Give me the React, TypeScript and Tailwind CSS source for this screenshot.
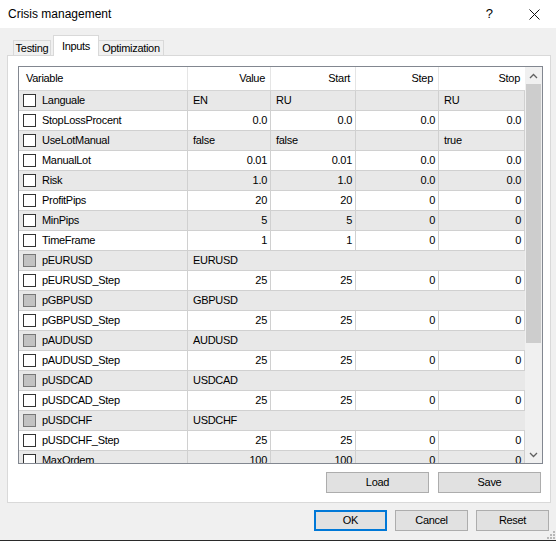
import React from "react";

type Row = { name: string; cells?: string[]; left?: boolean; section?: string };

const rows: Row[] = [
  { name: "Languale", cells: ["EN", "RU", "", "RU"], left: true },
  { name: "StopLossProcent", cells: ["0.0", "0.0", "0.0", "0.0"] },
  { name: "UseLotManual", cells: ["false", "false", "", "true"], left: true },
  { name: "ManualLot", cells: ["0.01", "0.01", "0.0", "0.0"] },
  { name: "Risk", cells: ["1.0", "1.0", "0.0", "0.0"] },
  { name: "ProfitPips", cells: ["20", "20", "0", "0"] },
  { name: "MinPips", cells: ["5", "5", "0", "0"] },
  { name: "TimeFrame", cells: ["1", "1", "0", "0"] },
  { name: "pEURUSD", section: "EURUSD" },
  { name: "pEURUSD_Step", cells: ["25", "25", "0", "0"] },
  { name: "pGBPUSD", section: "GBPUSD" },
  { name: "pGBPUSD_Step", cells: ["25", "25", "0", "0"] },
  { name: "pAUDUSD", section: "AUDUSD" },
  { name: "pAUDUSD_Step", cells: ["25", "25", "0", "0"] },
  { name: "pUSDCAD", section: "USDCAD" },
  { name: "pUSDCAD_Step", cells: ["25", "25", "0", "0"] },
  { name: "pUSDCHF", section: "USDCHF" },
  { name: "pUSDCHF_Step", cells: ["25", "25", "0", "0"] },
  { name: "MaxOrdem", cells: ["100", "100", "0", "0"] },
];

const colWidths = ["w-[83px]", "w-[85px]", "w-[83px]", "w-[86px]"];

function Check({ gray }: { gray?: boolean }) {
  return (
    <span
      className={`w-[13px] h-[13px] shrink-0 border ${
        gray ? "border-[#777] bg-[#c2c2c2]" : "border-[#333] bg-white"
      }`}
    />
  );
}

function Button({ label, focused, w }: { label: string; focused?: boolean; w: string }) {
  return (
    <div
      className={`${w} h-[21px] flex items-center justify-center bg-[#e1e1e1] ${
        focused ? "border-2 border-[#0078d7]" : "border border-[#adadad]"
      }`}
    >
      {label}
    </div>
  );
}

function Chevron({ up }: { up?: boolean }) {
  return (
    <svg width="9" height="6" viewBox="0 0 9 6" className="text-[#606060]">
      <polyline
        points={up ? "1,5 4.5,1.5 8,5" : "1,1 4.5,4.5 8,1"}
        fill="none"
        stroke="currentColor"
        strokeWidth="1.3"
      />
    </svg>
  );
}

export default function App() {
  return (
    <div className="w-[556px] h-[541px] flex flex-col font-['Liberation_Sans',Arial,sans-serif] text-[11px] tracking-[-0.3px] text-black overflow-hidden">
      {/* Title bar */}
      <div className="h-[28px] bg-white flex items-center pl-[8px] text-[12px] tracking-normal">
        <span>Crisis management</span>
        <span className="ml-auto mr-[36px] text-[13px]">?</span>
        <svg width="11" height="11" viewBox="0 0 11 11" className="mr-[16px]">
          <path d="M0.5 0.5 L10.5 10.5 M10.5 0.5 L0.5 10.5" stroke="#111" strokeWidth="1" />
        </svg>
      </div>

      {/* Body */}
      <div className="flex-1 bg-[#f0f0f0] flex flex-col border-b border-[#2a2a2a]">
        {/* Tabs */}
        <div className="h-[27px] flex items-end pl-[13px]">
          <div className="w-[38px] h-[15px] border border-b-0 border-[#d9d9d9] flex items-center justify-center">
            Testing
          </div>
          <div className="ml-[2px] w-[46px] h-[21px] -mb-px relative z-10 bg-white border border-b-0 border-[#d9d9d9] flex items-start justify-center pt-[2px]">
            Inputs
          </div>
          <div className="w-[65px] h-[15px] border border-b-0 border-l-0 border-[#d9d9d9] flex items-center justify-center">
            Optimization
          </div>
        </div>

        {/* Panel */}
        <div className="ml-[7px] w-[544px] h-[448px] border border-[#d9d9d9] bg-white pt-[10px] pl-[10px]">
          <div className="w-[525px] h-[398px] border border-[#828790] flex">
            <div className="w-[506px] h-full flex flex-col overflow-hidden">
              {/* Header */}
              <div className="h-[24px] shrink-0 flex border-b border-[#d5d5d5] bg-white">
                <div className="w-[169px] flex items-center pl-[7px] border-r border-[#e5e5e5]">Variable</div>
                {["Value", "Start", "Step", "Stop"].map((h, i) => (
                  <div
                    key={h}
                    className={`${colWidths[i]} flex items-center justify-end pr-[5px] ${
                      i < 3 ? "border-r border-[#e5e5e5]" : ""
                    }`}
                  >
                    {h}
                  </div>
                ))}
              </div>
              {/* Rows */}
              {rows.map((r, idx) => (
                <div
                  key={r.name}
                  className={`h-[20px] shrink-0 flex border-b border-[#d0d0d0] ${
                    idx % 2 === 0 ? "bg-[#e8e8e8]" : "bg-white"
                  }`}
                >
                  <div className="w-[169px] flex items-center gap-[6px] pl-[4px] border-r border-[#d0d0d0]">
                    <Check gray={!!r.section} />
                    <span>{r.name}</span>
                  </div>
                  {r.section ? (
                    <div className="flex-1 flex items-center pl-[5px]">{r.section}</div>
                  ) : (
                    r.cells!.map((c, i) => (
                      <div
                        key={i}
                        className={`${colWidths[i]} flex items-center border-r border-[#d0d0d0] ${
                          r.left ? "pl-[5px]" : "justify-end pr-[3px]"
                        }`}
                      >
                        {c}
                      </div>
                    ))
                  )}
                </div>
              ))}
            </div>
            {/* Scrollbar */}
            <div className="w-[17px] h-full bg-[#f0f0f0] flex flex-col">
              <div className="h-[17px] flex items-center justify-center">
                <Chevron up />
              </div>
              <div className="mx-px h-[259px] bg-[#cdcdcd]" />
              <div className="flex-1" />
              <div className="h-[17px] flex items-center justify-center">
                <Chevron />
              </div>
            </div>
          </div>
          <div className="w-[523px] flex justify-end gap-[9px] mt-[8px]">
            <Button label="Load" w="w-[103px]" />
            <Button label="Save" w="w-[103px]" />
          </div>
        </div>

        {/* Dialog buttons */}
        <div className="flex justify-end gap-[8px] pr-[7px] mt-[7px] relative">
          <Button label="OK" focused w="w-[73px]" />
          <Button label="Cancel" w="w-[73px]" />
          <Button label="Reset" w="w-[73px]" />
        </div>
        <div className="flex-1 flex justify-end items-end pr-[1px] pb-[1px]">
          <svg width="8" height="8" viewBox="0 0 8 8">
            {[
              [6, 0], [6, 3], [3, 3], [6, 6], [3, 6], [0, 6],
            ].map(([x, y], i) => (
              <rect key={i} x={x} y={y} width="2" height="2" fill="#b8b8b8" />
            ))}
          </svg>
        </div>
      </div>
    </div>
  );
}
